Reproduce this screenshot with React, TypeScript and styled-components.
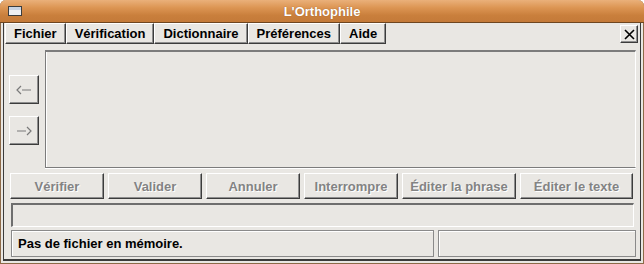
import React from 'react';
import styled, { createGlobalStyle } from 'styled-components';

const GlobalStyle = createGlobalStyle`
  html, body {
    margin: 0;
    padding: 0;
    background: #ffffff;
  }
  body {
    font-family: 'Liberation Sans', Arial, sans-serif;
  }
`;

const WindowDiv = styled.div`
  display: flex;
  flex-direction: column;
  width: 644px;
  height: 264px;
  box-sizing: border-box;
  background: #e9e7e3;
  border-radius: 6px 6px 0 0;
  overflow: hidden;
  box-shadow: inset 1px 0 0 #8d6a48, inset -1px 0 0 #8d6a48, inset 0 -1px 0 #8d6a48;
`;

const TitleBar = styled.div`
  position: relative;
  flex: 0 0 22px;
  display: flex;
  align-items: center;
  justify-content: center;
  background: linear-gradient(#eab07a 0%, #dc9553 35%, #c97f3c 70%, #c47a39 100%);
  border-bottom: 1px solid #6e4620;
  color: #ffffff;
  font-weight: bold;
  font-size: 13px;
  text-shadow: 0 0 1px #8a5020;
`;

const TitleIcon = styled.span`
  position: absolute;
  left: 8px;
  top: 6px;
  width: 12px;
  height: 8px;
  border: 1px solid #3d3d3d;
  background: linear-gradient(#c9d4e4 0 3px, #eef0f3 3px);
`;

const Body = styled.div`
  flex: 1;
  display: flex;
  flex-direction: column;
  margin: 0 3px 3px 3px;
  border-left: 1px solid #3a3a3a;
  border-right: 1px solid #3a3a3a;
  border-bottom: 2px solid #3a3a3a;
  min-height: 0;
`;

const raised = `
  box-sizing: border-box;
  background: #e9e7e3;
  border-top: 1px solid #ffffff;
  border-left: 1px solid #ffffff;
  border-right: 1px solid #3c3c3c;
  border-bottom: 1px solid #3c3c3c;
  box-shadow: inset -1px -1px 0 #8e8e8e;
`;

const MenuBar = styled.div`
  display: flex;
  align-items: flex-start;
  padding-left: 1px;
  height: 22px;
`;

const MenuItem = styled.div`
  ${raised}
  height: 21px;
  padding: 0 8px;
  display: flex;
  align-items: center;
  font-size: 13px;
  font-weight: bold;
  color: #000000;
`;

const CloseButton = styled.div`
  ${raised}
  margin-left: auto;
  margin-right: 2px;
  margin-top: 2px;
  width: 18px;
  height: 18px;
  display: flex;
  align-items: center;
  justify-content: center;
`;

const MiddleRow = styled.div`
  display: flex;
  margin-top: 5px;
  height: 118px;
`;

const ArrowColumn = styled.div`
  display: flex;
  flex-direction: column;
  gap: 12px;
  padding: 25px 0 0 5px;
  width: 30px;
  margin-right: 6px;
`;

const ArrowButton = styled.div`
  ${raised}
  width: 30px;
  height: 29px;
  display: flex;
  align-items: center;
  justify-content: center;
`;

const TextPane = styled.div`
  flex: 1;
  margin-right: 4px;
  box-sizing: border-box;
  background: #e9e7e3;
  border-top: 2px solid #7c7c7c;
  border-left: 1px solid #7c7c7c;
  border-right: 1px solid #ffffff;
  border-bottom: 1px solid #7c7c7c;
  box-shadow: inset 1px 0 0 #ffffff, 0 1px 0 #ffffff;
`;

const ButtonRow = styled.div`
  display: flex;
  gap: 4px;
  margin-top: 5px;
  padding-left: 6px;
  height: 26px;
`;

const ActionButton = styled.div<{ $width: number }>`
  ${raised}
  width: ${(p) => p.$width}px;
  height: 26px;
  display: flex;
  align-items: center;
  justify-content: center;
  font-size: 13px;
  font-weight: bold;
  color: #838383;
  text-shadow: 1px 1px 0 #ffffff;
  white-space: nowrap;
`;

const ProgressField = styled.div`
  margin: 4px 6px 0 7px;
  height: 24px;
  box-sizing: border-box;
  border-top: 2px solid #6e6e6e;
  border-left: 2px solid #6e6e6e;
  border-right: 1px solid #ffffff;
  border-bottom: 1px solid #ffffff;
`;

const StatusRow = styled.div`
  display: flex;
  gap: 4px;
  margin: 3px 4px 0 7px;
  height: 27px;
`;

const StatusField = styled.div<{ $width?: number }>`
  box-sizing: border-box;
  ${(p) => (p.$width ? `width: ${p.$width}px;` : 'flex: 1;')}
  height: 27px;
  border: 1px solid #8a8a8a;
  box-shadow: inset 1px 1px 0 #ffffff;
  display: flex;
  align-items: center;
  padding-left: 6px;
  font-size: 13px;
  font-weight: bold;
  color: #000000;
`;

const menus = ['Fichier', 'Vérification', 'Dictionnaire', 'Préférences', 'Aide'];

const actions: [string, number][] = [
  ['Vérifier', 94],
  ['Valider', 94],
  ['Annuler', 94],
  ['Interrompre', 94],
  ['Éditer la phrase', 114],
  ['Éditer le texte', 113],
];

function LeftArrow() {
  return (
    <svg width="16" height="10" viewBox="0 0 16 10">
      <path d="M5 1 L1 5 L5 9" fill="none" stroke="#7a7a7a" strokeWidth="1.2" />
      <path d="M6 5 H15" stroke="#7a7a7a" strokeWidth="1.2" />
    </svg>
  );
}

function RightArrow() {
  return (
    <svg width="16" height="10" viewBox="0 0 16 10">
      <path d="M1 5 H10" stroke="#7a7a7a" strokeWidth="1.2" />
      <path d="M11 1 L15 5 L11 9" fill="none" stroke="#7a7a7a" strokeWidth="1.2" />
    </svg>
  );
}

export default function App() {
  return (
    <>
      <GlobalStyle />
      <WindowDiv>
        <TitleBar>
          <TitleIcon />
          L'Orthophile
        </TitleBar>
        <Body>
          <MenuBar>
            {menus.map((m) => (
              <MenuItem key={m}>{m}</MenuItem>
            ))}
            <CloseButton>
              <svg width="11" height="11" viewBox="0 0 11 11">
                <path d="M1 1 L10 10 M10 1 L1 10" stroke="#000" strokeWidth="1.6" />
              </svg>
            </CloseButton>
          </MenuBar>

          <MiddleRow>
            <ArrowColumn>
              <ArrowButton>
                <LeftArrow />
              </ArrowButton>
              <ArrowButton>
                <RightArrow />
              </ArrowButton>
            </ArrowColumn>
            <TextPane />
          </MiddleRow>

          <ButtonRow>
            {actions.map(([label, w]) => (
              <ActionButton key={label} $width={w}>
                {label}
              </ActionButton>
            ))}
          </ButtonRow>

          <ProgressField />

          <StatusRow>
            <StatusField $width={423}>Pas de fichier en mémoire.</StatusField>
            <StatusField />
          </StatusRow>
        </Body>
      </WindowDiv>
    </>
  );
}
